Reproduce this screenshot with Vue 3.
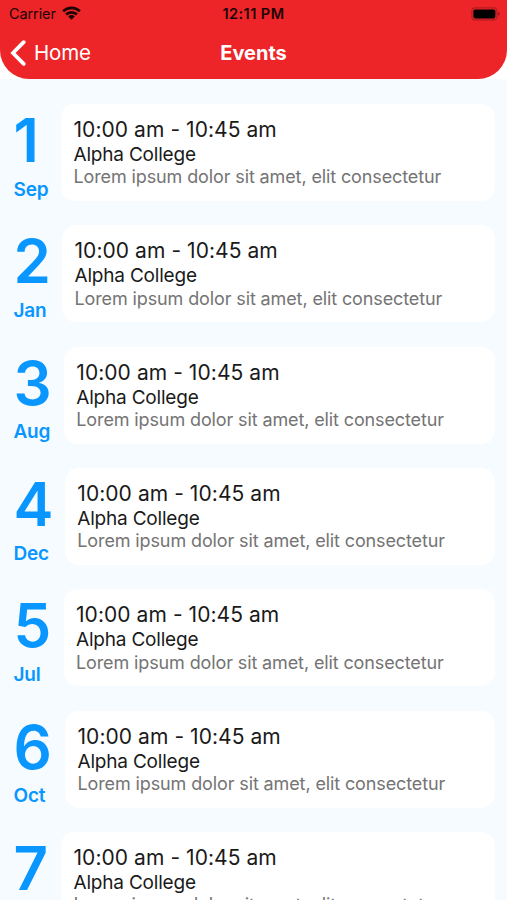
<script setup>
const events = [
  { day: 1, month: 'Sep', dateWidth: 47.5 },
  { day: 2, month: 'Jan', dateWidth: 48.5 },
  { day: 3, month: 'Aug', dateWidth: 50.3 },
  { day: 4, month: 'Dec', dateWidth: 51.3 },
  { day: 5, month: 'Jul', dateWidth: 50 },
  { day: 6, month: 'Oct', dateWidth: 51.5 },
  { day: 7, month: 'Nov', dateWidth: 47.5 },
]
</script>

<template>
  <div class="screen">
    <div class="top">
      <header class="header">
        <div class="status">
          <div class="carrier">
            <span>Carrier</span>
            <svg class="wifi" viewBox="0 0 20 14" width="19" height="14">
              <g fill="none" stroke="#1c0405" stroke-width="2.9">
                <path d="M1.2 5.2A12.6 12.6 0 0 1 18.8 5.2" />
                <path d="M4.3 8.7A8.2 8.2 0 0 1 15.7 8.7" />
              </g>
              <path d="M6.6 10.6A4.9 4.9 0 0 1 13.4 10.6L10 14Z" fill="#1c0405" />
            </svg>
          </div>
          <span class="clock">12:11 PM</span>
          <svg class="battery" viewBox="0 0 30 14" width="30" height="14">
            <rect x="0.9" y="0.9" width="25" height="12" rx="3.4" fill="none" stroke="#b01c20" stroke-width="1.2" />
            <rect x="2.4" y="2.4" width="22" height="9" rx="1.8" fill="#000" />
            <path d="M27.2 5.1Q29 5.7 29 6.9T27.2 8.7Z" fill="#9a171b" />
          </svg>
        </div>
        <nav class="nav">
          <div class="back">
            <svg viewBox="0 0 16 26" width="16" height="26">
              <path d="M13.7 2.2L3 13L13.7 23.8" fill="none" stroke="#fff" stroke-width="3.8" stroke-linecap="round" stroke-linejoin="miter" />
            </svg>
            <span>Home</span>
          </div>
          <h1 class="title">Events</h1>
        </nav>
      </header>
    </div>
    <main class="list">
      <section v-for="event in events" :key="event.day" class="row">
        <div class="date" :style="{ width: event.dateWidth + 'px' }">
          <div class="day">{{ event.day }}</div>
          <div class="month">{{ event.month }}</div>
        </div>
        <article class="card">
          <div class="time">10:00 am - 10:45 am</div>
          <div class="place">Alpha College</div>
          <div class="desc">Lorem ipsum dolor sit amet, elit consectetur</div>
        </article>
      </section>
    </main>
  </div>
</template>

<style>
body {
  margin: 0;
  background: #f5fbfe;
}
</style>

<style scoped>
.screen {
  width: 507px;
  height: 900px;
  overflow: hidden;
  background: #f5fbfe;
  font-family: Inter, "Liberation Sans", sans-serif;
}
.top {
  background: #fff;
}
.header {
  height: 79px;
  background: #ed2529;
  border-radius: 0 0 29px 29px;
}
.status {
  display: grid;
  grid-template-columns: 1fr auto 1fr;
  align-items: center;
  height: 27px;
  padding: 0 6px 0 9px;
  color: #1c0405;
  font-size: 14.5px;
}
.carrier {
  display: flex;
  align-items: center;
  gap: 6px;
}
.carrier span {
  letter-spacing: -0.1px;
}
.wifi {
  margin-top: -2px;
}
.clock {
  font-weight: 600;
  letter-spacing: 0.45px;
  margin-right: 3px;
}
.battery {
  justify-self: end;
}
.nav {
  display: grid;
  grid-template-columns: 1fr auto 1fr;
  align-items: center;
  height: 51px;
  padding: 0 10px;
  color: #fff;
}
.back {
  display: flex;
  align-items: center;
  gap: 8px;
  font-size: 20.5px;
  letter-spacing: -0.2px;
}
.title {
  margin: 0;
  font-size: 20px;
  font-weight: 700;
}
.list {
  display: flex;
  flex-direction: column;
  gap: 24.35px;
  padding: 25px 12px 0 13.5px;
}
.row {
  display: flex;
  flex: none;
  height: 97px;
}
.date {
  flex: none;
  color: #0a96ff;
  font-weight: 600;
  white-space: nowrap;
}
.day {
  font-size: 60px;
  line-height: 73px;
}
.month {
  padding-top: 0.5px;
  font-size: 19px;
  line-height: 23.6px;
  letter-spacing: -0.2px;
}
.card {
  flex: 1;
  box-sizing: border-box;
  padding: 13px 0 0 12.5px;
  background: #fff;
  border-radius: 14px;
  white-space: nowrap;
}
.time {
  font-size: 21px;
  line-height: 26px;
  letter-spacing: 0.06px;
  color: #1a1a1a;
}
.place {
  font-size: 19px;
  line-height: 23.4px;
  letter-spacing: -0.2px;
  color: #1a1a1a;
}
.desc {
  font-size: 18px;
  line-height: 22.6px;
  letter-spacing: -0.12px;
  color: #747474;
}
</style>
